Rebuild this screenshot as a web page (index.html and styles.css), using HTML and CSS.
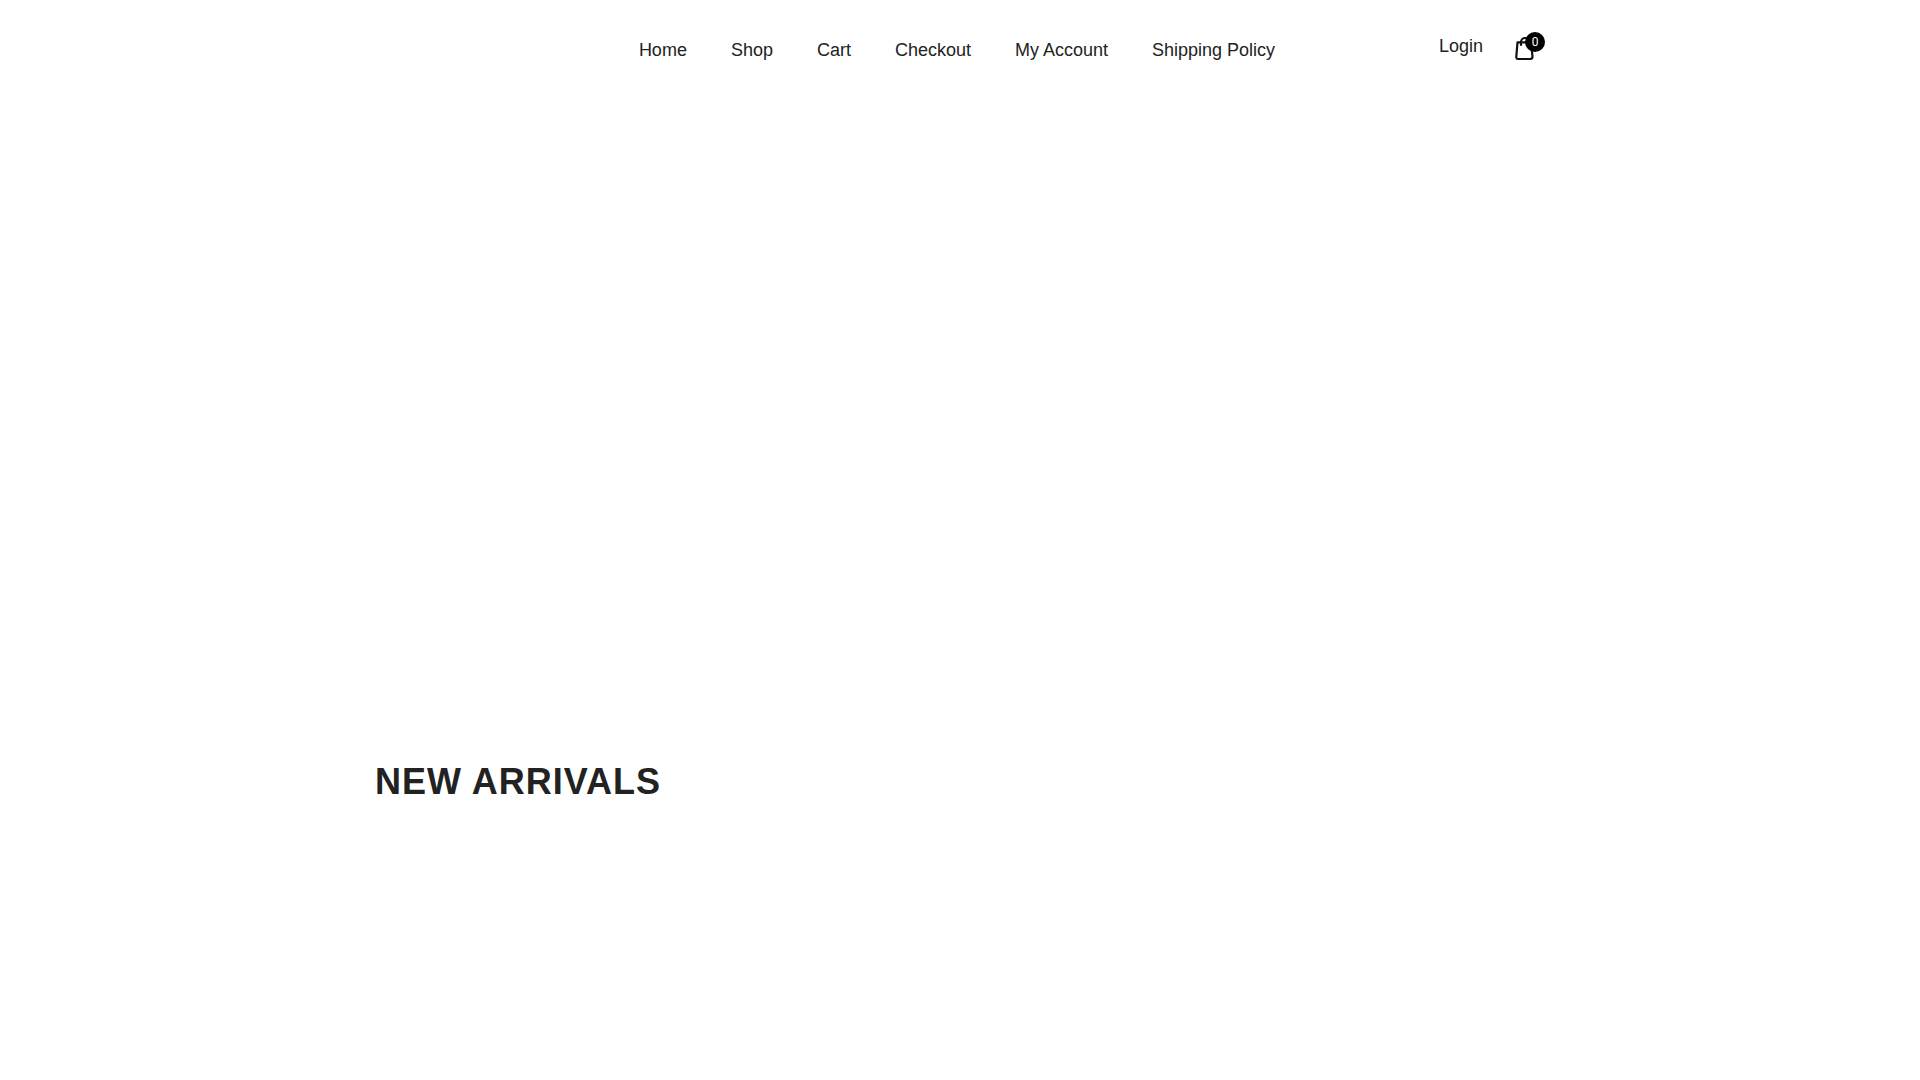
FILE: index.html
```html
<!DOCTYPE html>
<html lang="en">
<head>
<meta charset="UTF-8" />
<meta name="viewport" content="width=device-width, initial-scale=1" />
<title>Home</title>
<link rel="stylesheet" href="styles.css">
</head>
<body>
<header class="header">
  <div class="container header-inner">
    <div class="logo"></div>
    <nav class="main-nav">
      <ul>
        <li><a href="#">Home</a></li>
        <li><a href="#">Shop</a></li>
        <li><a href="#">Cart</a></li>
        <li><a href="#">Checkout</a></li>
        <li><a href="#">My Account</a></li>
        <li><a href="#">Shipping Policy</a></li>
      </ul>
    </nav>
    <div class="header-action">
      <a href="#" class="login">Login</a>
      <a href="#" class="cart" aria-label="Cart">
        <svg width="20" height="24" viewBox="0 0 20 24" fill="none" stroke="#111" stroke-width="2.2" stroke-linejoin="round" stroke-linecap="round">
          <path d="M2.500 6.300h13.500l1.500 14.200q0 2.500-2.500 2.500h-11.500q-2.300 0-2.200-2.300z" />
          <path d="M6 9V6a4 4 0 0 1 8 0v3" />
        </svg>
        <span class="cart-count">0</span>
      </a>
    </div>
  </div>
</header>

<main>
  <section class="banner"></section>
  <section class="arrivals">
    <div class="container">
      <h2>NEW ARRIVALS</h2>
    </div>
  </section>
</main>
</body>
</html>
```
FILE: styles.css
```css
* {
  box-sizing: border-box;
}

body {
  margin: 0;
  font-family: "Liberation Sans", Arial, sans-serif;
  font-size: 18px;
  line-height: 28px;
  color: #222;
  background: #fff;
}

a {
  color: inherit;
  text-decoration: none;
}

.container {
  max-width: 1200px;
  margin: 0 auto;
  padding: 0 15px;
}

.header-inner {
  display: grid;
  grid-template-columns: 1fr auto 1fr;
  height: 100px;
  align-items: center;
}

.main-nav {
  padding-right: 6px;
}

.main-nav ul {
  display: flex;
  gap: 44px;
  margin: 0;
  padding: 0;
  list-style: none;
}

.header-action {
  display: flex;
  justify-content: flex-end;
  align-items: flex-end;
  gap: 32px;
  padding-bottom: 8px;
}

.cart {
  position: relative;
  display: flex;
  padding-right: 10px;
}

/* item counter over the bag */
.cart-count {
  position: absolute;
  top: -4px;
  right: 0;
  width: 20px;
  height: 20px;
  border-radius: 50%;
  background: #000;
  color: #fff;
  font-family: Roboto, "Liberation Sans", sans-serif;
  font-size: 12px;
  line-height: 20px;
  text-align: center;
}

.banner {
  height: 660px;
}

.arrivals h2 {
  margin: 0;
  font-size: 36px;
  line-height: 44px;
  letter-spacing: 1px;
}
```
